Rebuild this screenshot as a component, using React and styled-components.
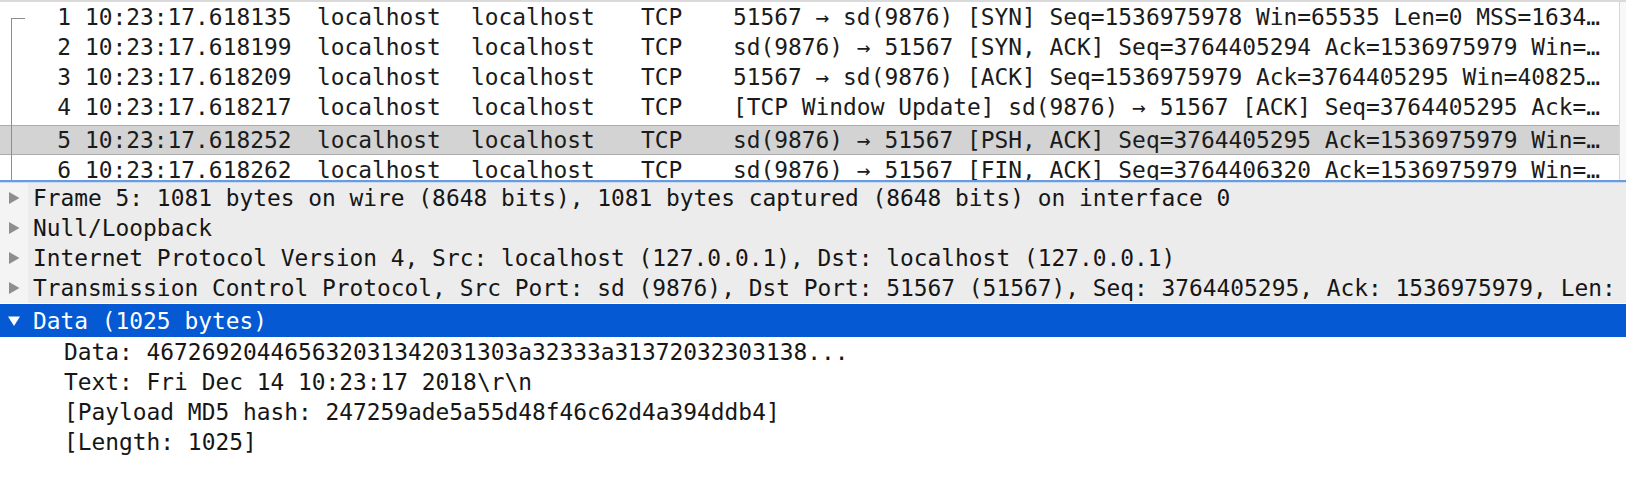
import React from "react";
import styled, { createGlobalStyle } from "styled-components";

const GlobalStyle = createGlobalStyle`
  html, body {
    margin: 0;
    padding: 0;
    background: #ffffff;
  }
  body {
    font-family: "DejaVu Sans Mono", "Liberation Mono", monospace;
    color: #1b1b1b;
  }
`;

const FONT_SIZE = "22.87px";

const Window = styled.div`
  width: 1626px;
  height: 489px;
  display: flex;
  flex-direction: column;
  overflow: hidden;
  background: #ffffff;
  font-family: "DejaVu Sans Mono", "Liberation Mono", monospace;
  font-size: ${FONT_SIZE};
`;

const PacketPane = styled.div`
  position: relative;
  height: 180px;
  flex: 0 0 auto;
  display: flex;
  border-top: 2px solid #dadada;
  box-sizing: border-box;
  overflow: hidden;
`;

const PacketList = styled.div`
  position: relative;
  flex: 1 1 auto;
  display: flex;
  flex-direction: column;
  min-width: 0;
`;

const ScrollTrack = styled.div`
  flex: 0 0 6px;
  border-left: 1px solid #d6d6d6;
  background: #f8f8f8;
`;

const PacketRow = styled.div`
  flex: 0 0 auto;
  display: grid;
  grid-template-columns: 71px 14px 232px 154px 170px 92px minmax(0, 1fr);
  align-items: center;
  height: 30px;
  box-sizing: border-box;
  white-space: pre;
  line-height: 30px;
  background: ${(p) => (p.$selected ? "#d3d3d3" : "transparent")};
  border-top: ${(p) => (p.$selected ? "1px solid #acacac" : "none")};
  border-bottom: ${(p) => (p.$selected ? "1px solid #acacac" : "none")};
  margin-top: ${(p) => (p.$selected ? "3px" : "0")};
`;

const Cell = styled.span`
  overflow: hidden;
  text-align: ${(p) => (p.$align === "right" ? "right" : "left")};
`;

const Bracket = styled.div`
  position: absolute;
  left: 11px;
  top: 16px;
  bottom: 0;
  width: 13px;
  border-left: 1px solid #8d8d8d;
  border-top: 1px solid #8d8d8d;
  pointer-events: none;
`;

const Splitter = styled.div`
  flex: 0 0 auto;
  height: 2px;
  background: #6b9bdb;
  border-bottom: 1px solid #c9dbf2;
`;

const DetailPane = styled.div`
  flex: 1 1 auto;
  display: flex;
  flex-direction: column;
  overflow: hidden;
`;

const TreeRow = styled.div`
  flex: 0 0 auto;
  display: flex;
  align-items: center;
  height: ${(p) => (p.$selected ? "33px" : "30px")};
  margin-top: ${(p) => (p.$selected ? "1px" : "0")};
  white-space: pre;
  background: ${(p) =>
    p.$selected ? "#0559d3" : p.$level === 0 ? "#ececec" : "#ffffff"};
  color: ${(p) => (p.$selected ? "#ffffff" : "#161616")};
`;

const Gutter = styled.div`
  flex: 0 0 28px;
  align-self: stretch;
  display: flex;
  align-items: center;
  background: ${(p) =>
    p.$selected ? "#0559d3" : p.$level === 0 ? "#f4f4f4" : "#ffffff"};
`;

const Label = styled.span`
  padding-left: ${(p) => 5 + p.$level * 31}px;
  line-height: 30px;
`;

const Disclosure = ({ open, selected }) => (
  <svg
    width="12"
    height="12"
    viewBox="0 0 12 12"
    style={{ marginLeft: 8, display: "block" }}
  >
    {open ? (
      <polygon points="0,1.5 12,1.5 6,11" fill={selected ? "#ffffff" : "#8c8c8c"} />
    ) : (
      <polygon points="1,0 11.5,6 1,12" fill="#8e8e8e" />
    )}
  </svg>
);

const packets = [
  {
    no: 1,
    time: "10:23:17.618135",
    info: "51567 → sd(9876) [SYN] Seq=1536975978 Win=65535 Len=0 MSS=1634…",
  },
  {
    no: 2,
    time: "10:23:17.618199",
    info: "sd(9876) → 51567 [SYN, ACK] Seq=3764405294 Ack=1536975979 Win=…",
  },
  {
    no: 3,
    time: "10:23:17.618209",
    info: "51567 → sd(9876) [ACK] Seq=1536975979 Ack=3764405295 Win=40825…",
  },
  {
    no: 4,
    time: "10:23:17.618217",
    info: "[TCP Window Update] sd(9876) → 51567 [ACK] Seq=3764405295 Ack=…",
  },
  {
    no: 5,
    time: "10:23:17.618252",
    info: "sd(9876) → 51567 [PSH, ACK] Seq=3764405295 Ack=1536975979 Win=…",
    selected: true,
  },
  {
    no: 6,
    time: "10:23:17.618262",
    info: "sd(9876) → 51567 [FIN, ACK] Seq=3764406320 Ack=1536975979 Win=…",
  },
];

const tree = [
  {
    level: 0,
    text: "Frame 5: 1081 bytes on wire (8648 bits), 1081 bytes captured (8648 bits) on interface 0",
  },
  { level: 0, text: "Null/Loopback" },
  {
    level: 0,
    text: "Internet Protocol Version 4, Src: localhost (127.0.0.1), Dst: localhost (127.0.0.1)",
  },
  {
    level: 0,
    text: "Transmission Control Protocol, Src Port: sd (9876), Dst Port: 51567 (51567), Seq: 3764405295, Ack: 1536975979, Len: 1025",
  },
  { level: 0, text: "Data (1025 bytes)", open: true, selected: true },
  {
    level: 1,
    text: "Data: 467269204465632031342031303a32333a31372032303138...",
  },
  { level: 1, text: "Text: Fri Dec 14 10:23:17 2018\\r\\n" },
  { level: 1, text: "[Payload MD5 hash: 247259ade5a55d48f46c62d4a394ddb4]" },
  { level: 1, text: "[Length: 1025]" },
];

export default function App() {
  return (
    <>
      <GlobalStyle />
      <Window>
        <PacketPane>
          <PacketList>
            {packets.map((p) => (
              <PacketRow key={p.no} $selected={p.selected}>
                <Cell $align="right">{p.no}</Cell>
                <Cell />
                <Cell>{p.time}</Cell>
                <Cell>localhost</Cell>
                <Cell>localhost</Cell>
                <Cell>TCP</Cell>
                <Cell>{p.info}</Cell>
              </PacketRow>
            ))}
            <Bracket />
          </PacketList>
          <ScrollTrack />
        </PacketPane>
        <Splitter />
        <DetailPane>
          {tree.map((n, i) => (
            <TreeRow key={i} $level={n.level} $selected={n.selected}>
              <Gutter $level={n.level} $selected={n.selected}>
                {n.level === 0 && <Disclosure open={n.open} selected={n.selected} />}
              </Gutter>
              <Label $level={n.level}>{n.text}</Label>
            </TreeRow>
          ))}
        </DetailPane>
      </Window>
    </>
  );
}
